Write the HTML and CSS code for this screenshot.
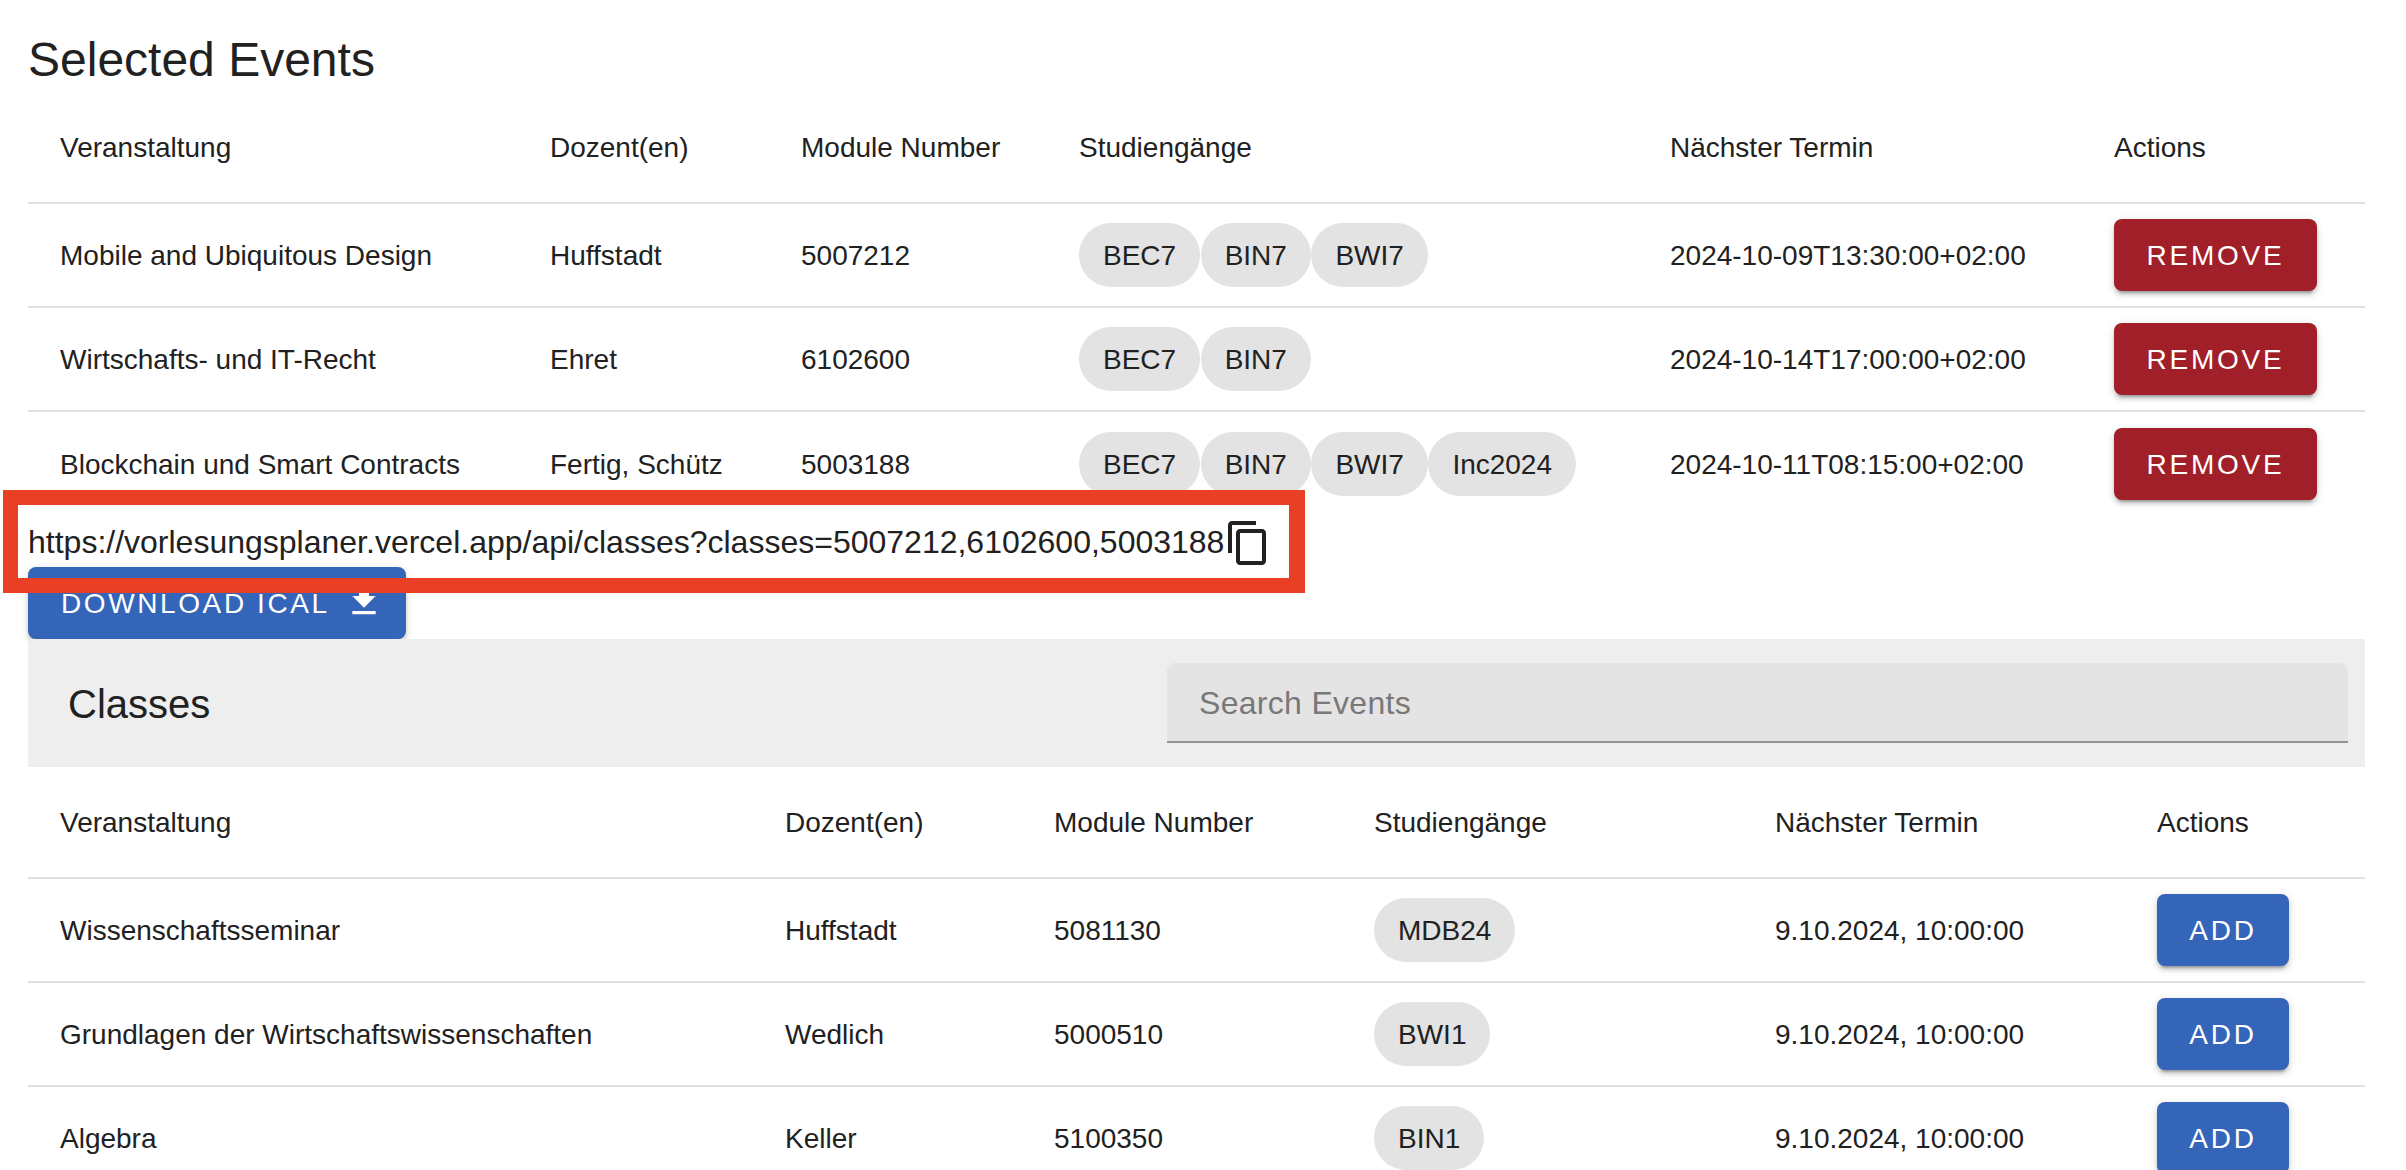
FILE: index.html
```html
<!DOCTYPE html>
<html lang="en">
<head>
    <meta charset="UTF-8">
    <meta name="viewport" content="width=device-width, initial-scale=1.0">
    <title>Vorlesungsplaner</title>
    <link rel="stylesheet" href="styles.css">
</head>
<body>
    <main class="page">
        <h2 class="section-title">Selected Events</h2>

        <!-- Selected events -->
        <table class="events selected-table">
            <colgroup>
                <col class="sel-name"><col class="sel-teacher"><col class="sel-module"><col class="sel-courses"><col class="sel-date"><col class="sel-actions">
            </colgroup>
            <thead>
                <tr>
                    <th>Veranstaltung</th>
                    <th>Dozent(en)</th>
                    <th>Module Number</th>
                    <th>Studiengänge</th>
                    <th>Nächster Termin</th>
                    <th>Actions</th>
                </tr>
            </thead>
            <tbody>
                <tr>
                    <td>Mobile and Ubiquitous Design</td>
                    <td>Huffstadt</td>
                    <td>5007212</td>
                    <td class="chip-cell"><div class="chips"><span class="chip">BEC7</span><span class="chip">BIN7</span><span class="chip">BWI7</span></div></td>
                    <td>2024-10-09T13:30:00+02:00</td>
                    <td class="action-cell"><button class="btn btn-remove">Remove</button></td>
                </tr>
                <tr>
                    <td>Wirtschafts- und IT-Recht</td>
                    <td>Ehret</td>
                    <td>6102600</td>
                    <td class="chip-cell"><div class="chips"><span class="chip">BEC7</span><span class="chip">BIN7</span></div></td>
                    <td>2024-10-14T17:00:00+02:00</td>
                    <td class="action-cell"><button class="btn btn-remove">Remove</button></td>
                </tr>
                <tr>
                    <td>Blockchain und Smart Contracts</td>
                    <td>Fertig, Schütz</td>
                    <td>5003188</td>
                    <td class="chip-cell"><div class="chips"><span class="chip">BEC7</span><span class="chip">BIN7</span><span class="chip">BWI7</span><span class="chip">Inc2024</span></div></td>
                    <td>2024-10-11T08:15:00+02:00</td>
                    <td class="action-cell"><button class="btn btn-remove">Remove</button></td>
                </tr>
            </tbody>
        </table>

        <!-- Calendar link -->
        <div class="link-row">
            <span class="link-text">https://vorlesungsplaner.vercel.app/api/classes?classes=5007212,6102600,5003188</span>
            <svg class="copy-icon" viewBox="0 0 24 24"><path d="M16 1H4c-1.1 0-2 .9-2 2v14h2V3h12V1zm3 4H8c-1.1 0-2 .9-2 2v14c0 1.1.9 2 2 2h11c1.1 0 2-.9 2-2V7c0-1.1-.9-2-2-2zm0 16H8V7h11v14z"/></svg>
        </div>
        <button class="btn btn-primary btn-download">
            Download iCal
            <svg class="download-icon" viewBox="0 0 24 24"><path d="M5 20h14v-2H5zM19 9h-4V3H9v6H5l7 7z"/></svg>
        </button>

        <!-- Classes -->
        <div class="toolbar">
            <h3 class="toolbar-title">Classes</h3>
            <input class="search" type="text" placeholder="Search Events">
        </div>

        <table class="events classes-table">
            <colgroup>
                <col class="cls-name"><col class="cls-teacher"><col class="cls-module"><col class="cls-courses"><col class="cls-date"><col class="cls-actions">
            </colgroup>
            <thead>
                <tr>
                    <th>Veranstaltung</th>
                    <th>Dozent(en)</th>
                    <th>Module Number</th>
                    <th>Studiengänge</th>
                    <th>Nächster Termin</th>
                    <th>Actions</th>
                </tr>
            </thead>
            <tbody>
                <tr>
                    <td>Wissenschaftsseminar</td>
                    <td>Huffstadt</td>
                    <td>5081130</td>
                    <td class="chip-cell"><div class="chips"><span class="chip">MDB24</span></div></td>
                    <td>9.10.2024, 10:00:00</td>
                    <td class="action-cell"><button class="btn btn-primary btn-add">Add</button></td>
                </tr>
                <tr>
                    <td>Grundlagen der Wirtschaftswissenschaften</td>
                    <td>Wedlich</td>
                    <td>5000510</td>
                    <td class="chip-cell"><div class="chips"><span class="chip">BWI1</span></div></td>
                    <td>9.10.2024, 10:00:00</td>
                    <td class="action-cell"><button class="btn btn-primary btn-add">Add</button></td>
                </tr>
                <tr>
                    <td>Algebra</td>
                    <td>Keller</td>
                    <td>5100350</td>
                    <td class="chip-cell"><div class="chips"><span class="chip">BIN1</span></div></td>
                    <td>9.10.2024, 10:00:00</td>
                    <td class="action-cell"><button class="btn btn-primary btn-add">Add</button></td>
                </tr>
            </tbody>
        </table>

        <!-- Red annotation frame -->
        <div class="highlight"></div>
    </main>
</body>
</html>
```

FILE: styles.css
```css
* {
    margin: 0;
    padding: 0;
    box-sizing: border-box;
}

html, body {
    height: 100%;
    overflow: hidden;
}

body {
    font-family: "Liberation Sans", Arial, sans-serif;
    background-color: #fff;
    color: #212121;
}

.page {
    position: relative;
    padding: 0 41px 0 28px;
}

.section-title {
    font-size: 48px;
    font-weight: 400;
    line-height: 56px;
    padding: 32px 0 4px;
}

/* Tables */
.events {
    width: 100%;
    table-layout: fixed;
    border-collapse: separate;
    border-spacing: 0;
    font-size: 28px;
}

.events th,
.events td {
    text-align: left;
    font-weight: 400;
    line-height: 48px;
    white-space: nowrap;
    vertical-align: middle;
    border-bottom: 2px solid #e0e0e0;
}

.events th {
    padding: 32px 32px 30px;
}

.events td {
    padding: 16px 32px 14px;
}

.events td.chip-cell,
.events td.action-cell {
    padding: 15px 32px;
}

.selected-table tbody tr:last-child td {
    padding: 17px 32px 18px;
    border-bottom: none;
}

.selected-table tbody tr:last-child td.chip-cell,
.selected-table tbody tr:last-child td.action-cell {
    padding: 16px 32px 19px;
}

.sel-name { width: 490px; }
.sel-teacher { width: 251px; }
.sel-module { width: 278px; }
.sel-courses { width: 591px; }
.sel-date { width: 444px; }
.sel-actions { width: 283px; }

.cls-name { width: 725px; }
.cls-teacher { width: 269px; }
.cls-module { width: 320px; }
.cls-courses { width: 401px; }
.cls-date { width: 382px; }
.cls-actions { width: 240px; }

/* Chips */
.chips {
    display: flex;
    gap: 0.5px;
}

.chip {
    height: 64px;
    line-height: 65px;
    padding: 0 24px;
    border-radius: 32px;
    background-color: #e3e3e3;
}

/* Buttons */
.btn {
    display: flex;
    justify-content: center;
    align-items: center;
    height: 72px;
    padding: 2px 32px 0;
    border: none;
    border-radius: 8px;
    font-family: inherit;
    font-size: 28px;
    letter-spacing: 2.8px;
    text-transform: uppercase;
    white-space: nowrap;
    color: #fff;
    box-shadow: 0 6px 2px -4px rgba(0, 0, 0, 0.2), 0 4px 4px 0 rgba(0, 0, 0, 0.14), 0 2px 10px 0 rgba(0, 0, 0, 0.12);
}

.btn-primary {
    background-color: #3465b8;
}

.btn-remove {
    width: 203px;
    background-color: #a01f28;
}

.btn-add {
    width: 132px;
}

.btn-download {
    width: 378px;
    padding: 2px 0 0 33px;
    justify-content: flex-start;
    letter-spacing: 2.6px;
}

.download-icon {
    flex-shrink: 0;
    width: 40px;
    height: 40px;
    margin: -6px 0 0 14px;
    fill: #fff;
}

/* Link row */
.link-row {
    display: flex;
    align-items: center;
    height: 48px;
    font-size: 32px;
}

.link-text {
    padding-bottom: 2px;
}

.copy-icon {
    width: 48px;
    height: 48px;
    fill: #212121;
}

/* Classes toolbar */
.toolbar {
    display: flex;
    justify-content: space-between;
    align-items: center;
    height: 128px;
    padding: 0 17px 0 40px;
    background-color: #eee;
}

.toolbar-title {
    padding-top: 2px;
    font-size: 40px;
    font-weight: 400;
}

.search {
    width: 1181px;
    height: 80px;
    padding: 2px 32px 0;
    border: none;
    border-bottom: 2px solid #949494;
    border-radius: 8px 8px 0 0;
    background-color: #e4e4e4;
    font-family: inherit;
    font-size: 32px;
    letter-spacing: 0.3px;
    color: #212121;
}

.search::placeholder {
    color: #787878;
    opacity: 1;
}

/* Annotation drawn over the page */
.highlight {
    position: absolute;
    left: 3px;
    top: 490px;
    width: 1302px;
    height: 103px;
    border: 15px solid #e94025;
    border-right-width: 16px;
}
```
